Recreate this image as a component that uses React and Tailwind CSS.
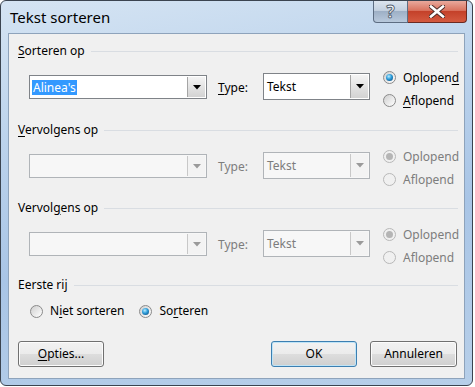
import React from 'react'

const font = { fontFamily: '"Noto Sans", "Open Sans", sans-serif' }

function U({ children }) {
  return <span className="underline underline-offset-2">{children}</span>
}

function Arrow({ disabled }) {
  return (
    <svg width="8" height="5" viewBox="0 0 8 5">
      <path d="M0 0H8L4 4.5Z" fill={disabled ? '#9a9a9a' : '#000'} />
    </svg>
  )
}

function Combo({ value, highlight, disabled, className }) {
  return (
    <div
      className={`flex border ${
        disabled ? 'border-[#b0b4b8] bg-[#f7f7f7] text-[#7d7d7d]' : 'border-[#7f8388] bg-white text-black'
      } ${className}`}
    >
      <div className="flex flex-1 items-center pl-[2px]">
        {highlight ? (
          <span className="bg-[#3399ff] px-[1px] text-white leading-[15px]">{value}</span>
        ) : (
          <span className="px-[1px]">{value}</span>
        )}
      </div>
      <div
        className={`m-[1px] flex w-[18px] items-center justify-center border-l ${
          disabled
            ? 'border-[#c8c8c8] bg-[#f3f3f3]'
            : 'border-[#a5a5a5] bg-gradient-to-b from-[#f4f4f4] to-[#d3d3d3]'
        }`}
      >
        <Arrow disabled={disabled} />
      </div>
    </div>
  )
}

function Radio({ checked, disabled }) {
  return (
    <span
      className={`flex h-[13px] w-[13px] shrink-0 items-center justify-center rounded-full border ${
        disabled
          ? 'border-[#b8b8b8] bg-[#f0f0f0]'
          : 'border-[#8a8a8a] bg-gradient-to-br from-[#cfcfcf] to-[#ffffff]'
      }`}
    >
      {checked && (
        <span
          className={`h-[7px] w-[7px] rounded-full ${
            disabled
              ? 'bg-[#b5b5b5]'
              : 'bg-[radial-gradient(circle_at_40%_35%,#b8ecff,#2a9ad8_45%,#0a3d6b)]'
          }`}
        />
      )}
    </span>
  )
}

function GroupLabel({ children }) {
  return (
    <div className="flex h-[16px] items-center gap-[6px] pl-[9px] pr-[6px]">
      <span className="whitespace-nowrap">{children}</span>
      <div className="h-px flex-1 bg-[#d9dde2]" />
    </div>
  )
}

function SortRow({ title, value, highlight, disabled, height }) {
  const dim = disabled ? 'text-[#7d7d7d]' : 'text-black'
  return (
    <div className={height}>
      <GroupLabel>{title}</GroupLabel>
      <div className="flex items-start pl-[20px] pt-[7px]">
        <Combo value={value} highlight={highlight} disabled={disabled} className="mt-[9px] h-[24px] w-[178px]" />
        <span className={`ml-[11px] mt-[13px] w-[45px] ${dim}`}>
          {disabled ? 'Type:' : <><U>T</U>ype:</>}
        </span>
        <Combo value="Tekst" disabled={disabled} className="mt-[7px] h-[27px] w-[107px]" />
        <div className="ml-[13px] flex flex-col">
          <div className="flex h-[23px] items-center gap-[7px]">
            <Radio checked disabled={disabled} />
            <span className={dim}>{disabled ? 'Oplopend' : <>Oplopen<U>d</U></>}</span>
          </div>
          <div className="flex h-[23px] items-center gap-[7px]">
            <Radio disabled={disabled} />
            <span className={dim}>{disabled ? 'Aflopend' : <><U>A</U>flopend</>}</span>
          </div>
        </div>
      </div>
    </div>
  )
}

function Button({ children, primary, className }) {
  return (
    <button
      className={`flex h-[26px] items-center justify-center rounded-[3px] border ${
        primary
          ? 'border-[#3c7fb1] shadow-[inset_0_0_0_1px_#bfe4f7]'
          : 'border-[#707070] shadow-[inset_0_0_0_1px_#fcfcfc]'
      } bg-[linear-gradient(#f2f2f2_0%,#ebebeb_50%,#dddddd_51%,#cfcfcf_100%)] ${className}`}
    >
      {children}
    </button>
  )
}

export default function App() {
  return (
    <div className="h-[387px] w-[475px] overflow-hidden bg-white text-[12px] text-black" style={font}>
      <div className="flex h-[386px] w-[473px] flex-col rounded-t-[6px] rounded-b-[6px] border border-[#3b4450] bg-[linear-gradient(170deg,#d5e4f3_0%,#bcd3ec_30%,#a9c5e6_60%,#b7cfe9_100%)]">
        <div className="flex h-[32px] items-start justify-between">
          <span className="pl-[9px] pt-[5px] text-[15px] text-black">Tekst sorteren</span>
          <div className="mr-[5px] flex h-[22px]">
            <div className="flex w-[35px] items-center justify-center rounded-bl-[4px] border border-t-0 border-[#5d6d82] bg-[linear-gradient(#dbe4ee_0%,#c3d0df_45%,#9eb0c6_50%,#b8c9dc_100%)]">
              <span className="text-[17px] font-bold leading-none text-white [-webkit-text-stroke:1px_#5a6675]">?</span>
            </div>
            <div className="flex w-[59px] items-center justify-center rounded-br-[4px] border border-l-0 border-t-0 border-[#6b2a22] bg-[linear-gradient(#e9a99c_0%,#d9735f_45%,#c4412a_50%,#d45a40_100%)]">
              <svg width="16" height="13" viewBox="0 0 16 13">
                <path d="M2 1.5L14 11.5M14 1.5L2 11.5" stroke="#4a2a26" strokeWidth="4.5" strokeLinecap="square" />
                <path d="M2 1.5L14 11.5M14 1.5L2 11.5" stroke="#ffffff" strokeWidth="2.6" strokeLinecap="square" />
              </svg>
            </div>
          </div>
        </div>
        <div className="mx-[7px] mb-[6px] flex flex-1 flex-col border border-[#8ea3bb] bg-[#f0f0f0] pt-[9px]">
          <SortRow title={<><U>S</U>orteren op</>} value="Alinea's" highlight height="h-[79px]" />
          <SortRow title={<><U>V</U>ervolgens op</>} value="" disabled height="h-[78px]" />
          <SortRow title={<>Vervol<U>g</U>ens op</>} value="" disabled height="h-[77px]" />
          <div className="h-[52px]">
            <GroupLabel>Eerste rij</GroupLabel>
            <div className="flex items-center pl-[21px] pt-[9px]">
              <Radio />
              <span className="ml-[7px]">N<U>i</U>et sorteren</span>
              <span className="ml-[15px]"><Radio checked /></span>
              <span className="ml-[7px]">So<U>r</U>teren</span>
            </div>
          </div>
          <div className="flex items-center px-[7px] pt-[12px]">
            <Button className="ml-[2px] w-[86px]"><U>O</U>pties...</Button>
            <div className="flex-1" />
            <Button primary className="w-[86px]">OK</Button>
            <Button className="ml-[13px] w-[87px]">Annuleren</Button>
          </div>
        </div>
      </div>
    </div>
  )
}
